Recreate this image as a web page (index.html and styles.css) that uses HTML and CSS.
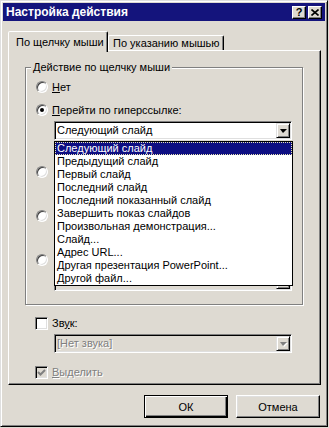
FILE: index.html
```html
<!DOCTYPE html>
<html lang="ru">
<head>
    <meta charset="UTF-8">
    <title>Настройка действия</title>
    <link rel="stylesheet" href="styles.css">
</head>
<body>
    <div class="window">
        <div class="titlebar">
            <span class="title">Настройка действия</span>
            <div class="title-buttons">
                <span class="title-btn">?</span>
                <span class="title-btn">
                    <svg width="8" height="7" viewBox="0 0 8 7"><path d="M0.5 0.5 L7.5 6.5 M7.5 0.5 L0.5 6.5" stroke="#000" stroke-width="1.6"/></svg>
                </span>
            </div>
        </div>

        <div class="content">
            <div class="tabs">
                <div class="tab tab-active">По щелчку мыши</div>
                <div class="tab tab-second">По указанию мышью</div>
            </div>

            <div class="panel">
                <fieldset class="group">
                    <legend>Действие по щелчку мыши</legend>
                    <div class="group-body">
                        <div class="option"><span class="radio"></span><span><u>Н</u>ет</span></div>
                        <div class="option row-link"><span class="radio checked"></span><span><u>П</u>ерейти по гиперссылке:</span></div>
                        <div class="combo combo-link">
                            <span class="combo-text">Следующий слайд</span>
                            <span class="combo-btn"><span class="arrow"></span></span>

                            <!-- open list of the hyperlink combo -->
                            <ul class="dropdown">
                                <li class="selected">Следующий слайд</li>
                                <li>Предыдущий слайд</li>
                                <li>Первый слайд</li>
                                <li>Последний слайд</li>
                                <li>Последний показанный слайд</li>
                                <li>Завершить показ слайдов</li>
                                <li>Произвольная демонстрация...</li>
                                <li>Слайд...</li>
                                <li>Адрес URL...</li>
                                <li>Другая презентация PowerPoint...</li>
                                <li>Другой файл...</li>
                            </ul>
                        </div>
                        <!-- rows hidden behind the open list -->
                        <div class="option row-program"><span class="radio"></span></div>
                        <div class="textbox"></div>
                        <div class="option row-next"><span class="radio"></span></div>
                        <div class="combo combo-disabled"><span class="combo-text"></span><span class="combo-btn"><span class="arrow"></span></span></div>
                        <div class="option row-next"><span class="radio"></span></div>
                        <div class="combo combo-disabled combo-last"><span class="combo-text"></span><span class="combo-btn"><span class="arrow"></span></span></div>
                    </div>
                </fieldset>

                <div class="extras">
                    <div class="check-row"><span class="checkbox"></span><span>Зв<u>у</u>к:</span></div>
                    <div class="combo combo-disabled">
                        <span class="combo-text">[Нет звука]</span>
                        <span class="combo-btn"><span class="arrow"></span></span>
                    </div>
                    <div class="check-row check-last disabled">
                        <span class="checkbox checkbox-disabled">
                            <svg width="9" height="9" viewBox="0 0 9 9"><path d="M1 4 L3.5 6.5 L8 2" fill="none" stroke="#808080" stroke-width="2"/></svg>
                        </span>
                        <span><u>В</u>ыделить</span>
                    </div>
                </div>
            </div>

            <div class="actions">
                <button class="btn btn-default">ОК</button>
                <button class="btn">Отмена</button>
            </div>
        </div>
    </div>
</body>
</html>
```

FILE: styles.css
```css
/* Page */
body {
    margin: 0;
    background-color: #dedad2;
    font-family: "Liberation Sans", Arial, sans-serif;
    font-size: 11px;
    color: #000;
}

/* Dialog window frame */
.window {
    width: 328px;
    height: 427px;
    box-sizing: border-box;
    padding: 2px;
    border: 1px solid;
    border-color: #dfdfdf #000 #000 #dfdfdf;
    box-shadow: inset 1px 1px #fff, inset -1px -1px #808080;
    background-color: #dedad2;
    display: flex;
    flex-direction: column;
}

/* Title bar */
.titlebar {
    height: 18px;
    flex-shrink: 0;
    background-color: #14147c;
    color: #fff;
    display: flex;
    align-items: center;
    justify-content: space-between;
    padding: 0 3px 0 3px;
}

.title {
    font-weight: bold;
    font-size: 12px;
}

.title-buttons {
    display: flex;
    gap: 2px;
}

.title-btn {
    width: 14px;
    height: 13px;
    box-sizing: border-box;
    background-color: #dedad2;
    border: 1px solid;
    border-color: #fff #000 #000 #fff;
    box-shadow: inset -1px -1px #808080;
    display: flex;
    align-items: center;
    justify-content: center;
    color: #000;
    font-weight: bold;
    font-size: 11px;
    line-height: 11px;
}

/* Main area */
.content {
    flex: 1;
    padding: 10px 4px 0 5px;
    display: flex;
    flex-direction: column;
}

/* Tabs */
.tabs {
    display: flex;
    align-items: flex-end;
}

.tab {
    height: 15px;
    box-sizing: border-box;
    border: 1px solid;
    border-bottom: none;
    border-color: #fff #000 transparent #fff;
    border-radius: 2px 2px 0 0;
    box-shadow: inset -1px 0 #808080;
    line-height: 14px;
    white-space: nowrap;
}

.tab-active {
    width: 100px;
    height: 21px;
    margin-bottom: -2px;
    padding-left: 7px;
    line-height: 20px;
    position: relative;
    z-index: 1;
    background-color: #dedad2;
}

.tab-second {
    width: 116px;
    padding-left: 4px;
}

/* Tab page */
.panel {
    height: 335px;
    box-sizing: border-box;
    border: 1px solid;
    border-color: #fff #000 #000 #fff;
    box-shadow: inset -1px -1px #808080;
    padding: 9px 0 0 16px;
}

/* Group box */
.group {
    width: 278px;
    box-sizing: border-box;
    margin: 0;
    padding: 0;
    border: 1px solid #808080;
    box-shadow: 1px 1px #fff, inset 1px 1px #fff;
}

.group legend {
    margin-left: 5px;
    padding: 0 2px;
    line-height: 14px;
    background-color: #dedad2;
}

.group-body {
    padding: 5px 0 13px 10px;
}

/* Radio rows */
.option,
.check-row {
    height: 16px;
    display: flex;
    align-items: center;
    gap: 4px;
    white-space: nowrap;
}

.row-link {
    margin-top: 7px;
}

.row-program {
    margin-top: 24px;
}

.row-next {
    margin-top: 6px;
}

.radio {
    width: 12px;
    height: 12px;
    box-sizing: border-box;
    border-radius: 50%;
    background-color: #fff;
    border: 1px solid;
    border-color: #808080 #fff #fff #808080;
    box-shadow: inset 1px 1px #404040, inset -1px -1px #dfdfdf;
    position: relative;
}

.radio.checked::after {
    content: "";
    position: absolute;
    left: 3px;
    top: 3px;
    width: 4px;
    height: 4px;
    border-radius: 50%;
    background-color: #000;
}

/* Combo boxes */
.combo {
    width: 238px;
    height: 19px;
    box-sizing: border-box;
    margin: 3px 0 0 18px;
    padding: 1px;
    border: 1px solid;
    border-color: #808080 #fff #fff #808080;
    box-shadow: inset 1px 1px #000, inset -1px -1px #dfdfdf;
    background-color: #fff;
    display: flex;
    align-items: center;
    justify-content: space-between;
}

.combo-link {
    position: relative;
}

.combo-last {
    margin-top: 4px;
}

.combo-text {
    padding-left: 1px;
    line-height: 15px;
    white-space: nowrap;
}

.combo-btn {
    width: 14px;
    height: 15px;
    box-sizing: border-box;
    background-color: #dedad2;
    border: 1px solid;
    border-color: #dfdfdf #000 #000 #dfdfdf;
    box-shadow: inset 1px 1px #fff, inset -1px -1px #808080;
    display: flex;
    align-items: center;
    justify-content: center;
}

.arrow {
    width: 0;
    height: 0;
    border-style: solid;
    border-width: 4px 4px 0 3px;
    border-color: #000 transparent transparent transparent;
}

.combo-disabled {
    background-color: #dedad2;
    color: #808080;
    text-shadow: 1px 1px 0 #fff;
}

.combo-disabled .arrow {
    border-top-color: #808080;
    filter: drop-shadow(1px 1px 0 #fff);
}

.textbox {
    width: 160px;
    height: 19px;
    box-sizing: border-box;
    margin: 3px 0 0 18px;
    border: 1px solid;
    border-color: #808080 #fff #fff #808080;
    box-shadow: inset 1px 1px #000, inset -1px -1px #dfdfdf;
}

/* Open drop-down list */
.dropdown {
    position: absolute;
    top: 19px;
    left: -1px;
    z-index: 2;
    width: 239px;
    margin: 0;
    padding: 0;
    list-style: none;
    box-sizing: border-box;
    border: 1px solid #000;
    background-color: #fff;
}

.dropdown li {
    height: 13px;
    line-height: 13px;
    padding-left: 2px;
    white-space: nowrap;
}

.dropdown li.selected {
    background-color: #0e0e82;
    color: #fff;
    outline: 1px dotted #e8e4b0;
    outline-offset: -1px;
}

/* Below the group box */
.extras {
    padding-left: 10px;
}

.extras .check-row {
    margin-top: 10px;
}

.extras .check-row.check-last {
    margin-top: 11px;
}

.extras .combo {
    margin-left: 19px;
}

.checkbox {
    width: 13px;
    height: 13px;
    box-sizing: border-box;
    background-color: #fff;
    border: 1px solid;
    border-color: #808080 #fff #fff #808080;
    box-shadow: inset 1px 1px #000, inset -1px -1px #dfdfdf;
    display: flex;
    align-items: center;
    justify-content: center;
}

.checkbox-disabled {
    background-color: #dedad2;
}

.disabled {
    color: #808080;
    text-shadow: 1px 1px 0 #fff;
}

/* Dialog buttons */
.actions {
    display: flex;
    justify-content: flex-end;
    gap: 8px;
    margin-top: 10px;
    padding-right: 1px;
}

.btn {
    width: 84px;
    height: 23px;
    box-sizing: border-box;
    font-family: inherit;
    font-size: 11px;
    color: #000;
    background-color: #dedad2;
    border: 1px solid;
    border-color: #fff #000 #000 #fff;
    box-shadow: inset -1px -1px #808080, inset 1px 1px #dfdfdf;
    padding: 0;
}

.btn-default {
    border-color: #000;
    box-shadow: inset 1px 1px #fff, inset -1px -1px #000, inset -2px -2px #808080;
}
```
